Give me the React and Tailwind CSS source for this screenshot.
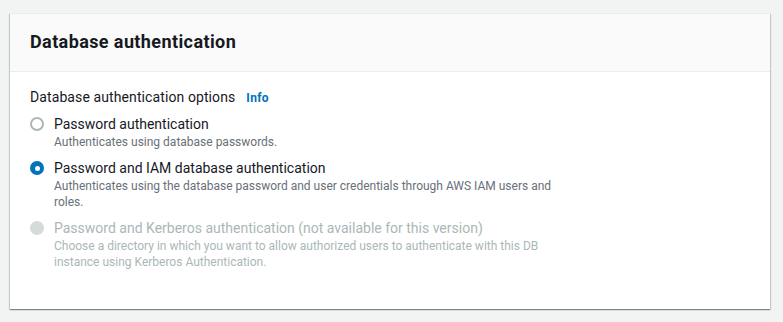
import { useState } from "react";

const options = [
  {
    id: "password",
    label: "Password authentication",
    description: "Authenticates using database passwords.",
  },
  {
    id: "iam",
    label: "Password and IAM database authentication",
    description:
      "Authenticates using the database password and user credentials through AWS IAM users and roles.",
  },
  {
    id: "kerberos",
    label: "Password and Kerberos authentication (not available for this version)",
    description:
      "Choose a directory in which you want to allow authorized users to authenticate with this DB instance using Kerberos Authentication.",
    disabled: true,
  },
];

function Radio({ checked, disabled }) {
  if (disabled) {
    return <span className="mt-[3px] block w-[14px] h-[14px] shrink-0 rounded-full bg-[#d5dbdb]"></span>;
  }
  if (checked) {
    return (
      <span className="mt-[3px] flex items-center justify-center w-[14px] h-[14px] shrink-0 rounded-full bg-[#0073bb]">
        <span className="block w-[5px] h-[5px] rounded-full bg-white"></span>
      </span>
    );
  }
  return <span className="mt-[3px] block w-[14px] h-[14px] shrink-0 rounded-full border-2 border-[#aab7b8] bg-white"></span>;
}

export default function App() {
  const [selected, setSelected] = useState("iam");

  return (
    <div className="min-h-screen bg-[#f2f3f3] pt-[13px] pl-[10px] pr-[13px] font-['Roboto',sans-serif] text-[#16191f]">
      <div className="bg-white border-t border-[#eaeded] shadow-[0_1px_1px_0_rgba(0,28,36,0.3),1px_1px_1px_0_rgba(0,28,36,0.15),-1px_1px_1px_0_rgba(0,28,36,0.15)]">
        <div className="bg-[#fafafa] border-b border-[#eaeded] px-5 pt-[17px] pb-[18px]">
          <h2 className="text-[18px] leading-[22px] font-bold tracking-[0.4px]">Database authentication</h2>
        </div>

        <div className="px-5 pt-[15px] pb-[39px]">
          <div className="flex items-baseline gap-[11px] text-[14px] leading-[20px]">
            <span className="tracking-[0.1px]">Database authentication options</span>
            <a href="#" className="text-[12px] font-bold tracking-[0.3px] text-[#0073bb]">Info</a>
          </div>

          <div className="mt-[6px] flex flex-col gap-[8px]">
            {options.map((opt) => (
              <label
                key={opt.id}
                onClick={() => !opt.disabled && setSelected(opt.id)}
                className={`flex gap-[10px] ${opt.disabled ? "cursor-not-allowed" : "cursor-pointer"}`}
              >
                <Radio checked={selected === opt.id} disabled={opt.disabled} />
                <div className="flex flex-col">
                  <span className={`text-[14px] leading-[20px] ${opt.disabled ? "text-[#aab7b8]" : "text-[#16191f]"}`}>
                    {opt.label}
                  </span>
                  <span className={`max-w-[505px] text-[12px] leading-[16px] ${opt.disabled ? "text-[#aab7b8]" : "text-[#687078]"}`}>
                    {opt.description}
                  </span>
                </div>
              </label>
            ))}
          </div>
        </div>
      </div>
    </div>
  );
}
